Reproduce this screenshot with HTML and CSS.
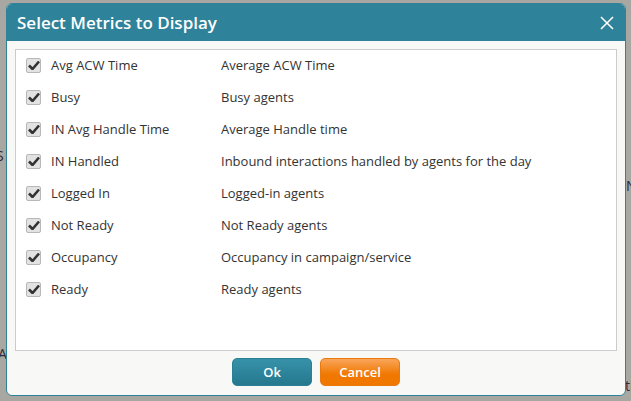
FILE: index.html
```html
<!DOCTYPE html>
<html lang="en">
<head>
  <meta charset="UTF-8">
  <title>Select Metrics to Display</title>
  <link rel="stylesheet" href="styles.css">
</head>
<body>
<div class="backdrop">
  <span class="bg-text bg-s">S</span>
  <span class="bg-text bg-a">A</span>
  <span class="bg-text bg-n">N</span>
  <span class="bg-text bg-ti">ti</span>
</div>

<div class="dialog">
  <div class="dialog-title">
    <span>Select Metrics to Display</span>
    <svg class="close" width="14" height="14" viewBox="0 0 14 14">
      <path d="M1 1 L13 13 M13 1 L1 13" stroke="#fff" stroke-width="1.6" fill="none"/>
    </svg>
  </div>
  <div class="dialog-body">
    <div class="metric-list" id="list"></div>
    <div class="actions">
      <button class="btn btn-ok">Ok</button>
      <button class="btn btn-cancel">Cancel</button>
    </div>
  </div>
</div>

<script>
const metrics = [
  ["Avg ACW Time", "Average ACW Time"],
  ["Busy", "Busy agents"],
  ["IN Avg Handle Time", "Average Handle time"],
  ["IN Handled", "Inbound interactions handled by agents for the day"],
  ["Logged In", "Logged-in agents"],
  ["Not Ready", "Not Ready agents"],
  ["Occupancy", "Occupancy in campaign/service"],
  ["Ready", "Ready agents"]
];

const list = document.getElementById("list");
metrics.forEach(m => {
  const row = document.createElement("div");
  row.className = "metric-row";
  row.innerHTML =
    '<span class="check"><svg width="12" height="10" viewBox="0 0 12 10"><path d="M1 5.5 L4.5 9 L11 1.5" stroke="#333" stroke-width="2.6" fill="none"/></svg></span>' +
    '<span class="metric-name">' + m[0] + '</span>' +
    '<span class="metric-desc">' + m[1] + '</span>';
  list.appendChild(row);
});
</script>
</body>
</html>
```

FILE: styles.css
```css
body {
  margin: 0;
  width: 631px;
  height: 401px;
  overflow: hidden;
  position: relative;
  background: #a9a7a1;
  font-family: "Open Sans", "Liberation Sans", sans-serif;
}

/* page behind the overlay */
.backdrop {
  position: absolute;
  inset: 0;
}

.bg-text {
  position: absolute;
  color: #2a2a3a;
  font-size: 14px;
}
.bg-s { left: -4px; top: 146px; }
.bg-a { left: -2px; top: 344px; }
.bg-n { left: 626px; top: 176px; }
.bg-ti { left: 625px; top: 376px; }

.dialog {
  position: absolute;
  left: 6px;
  top: 3px;
  width: 618px;
  height: 391px;
  background: #f8f8f6;
  border: 1px solid #2e8299;
  border-radius: 6px;
  overflow: hidden;
  display: flex;
  flex-direction: column;
}

.dialog-title {
  height: 37px;
  background: #2e8299;
  color: #fff;
  display: flex;
  align-items: center;
  justify-content: space-between;
  padding: 0 11px 0 10px;
  font-size: 17px;
  font-weight: 600;
  flex-shrink: 0;
}

.close {
  margin-top: 1px;
}

.dialog-body {
  flex: 1;
  padding: 8px 8px 0 8px;
  display: flex;
  flex-direction: column;
}

.metric-list {
  height: 300px;
  background: #fff;
  border: 1px solid #cccccc;
}

.metric-row {
  display: flex;
  align-items: center;
  height: 32px;
  font-size: 13px;
  color: #333;
}

.metric-row:first-child {
  margin-top: -1px;
}

.check {
  width: 13px;
  height: 13px;
  margin-left: 10px;
  border: 1px solid #b8b8b8;
  border-radius: 2px;
  background: #e2e2e2;
  display: flex;
  align-items: center;
  justify-content: center;
}

.metric-name {
  width: 170px;
  margin-left: 10px;
}

.actions {
  display: flex;
  justify-content: center;
  gap: 8px;
  margin-top: 7px;
}

.btn {
  width: 80px;
  height: 28px;
  border: 1px solid;
  border-radius: 5px;
  color: #fff;
  font-family: inherit;
  font-size: 13px;
  font-weight: 600;
  cursor: pointer;
}

.btn-ok {
  background: linear-gradient(#3692a9, #25788e);
  border-color: #2a7f95;
}

.btn-cancel {
  background: linear-gradient(#f9a55a, #f07800 60%);
  border-color: #e87a10;
}
```
